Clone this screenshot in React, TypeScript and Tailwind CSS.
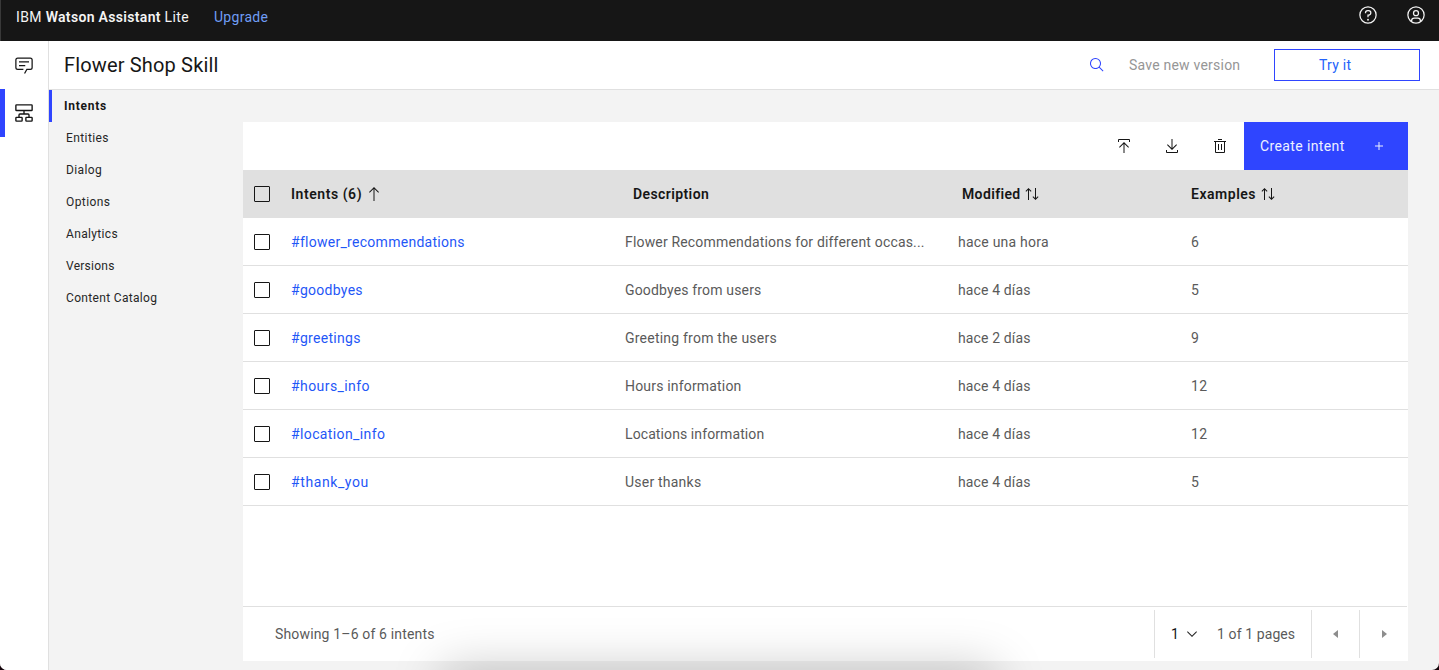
import React from "react";

type IconProps = { className?: string; children: React.ReactNode };

function Icon({ className = "size-4", children }: IconProps) {
  return (
    <svg viewBox="0 0 32 32" fill="currentColor" aria-hidden="true" className={`block shrink-0 ${className}`}>
      {children}
    </svg>
  );
}

const ChatIcon = () => (
  <Icon className="size-5">
    <path d="M17.74,30,16,29l4-7h6a2,2,0,0,0,2-2V8a2,2,0,0,0-2-2H6A2,2,0,0,0,4,8V20a2,2,0,0,0,2,2h9v2H6a4,4,0,0,1-4-4V8A4,4,0,0,1,6,4H26a4,4,0,0,1,4,4V20a4,4,0,0,1-4,4H21.16Z" />
    <path d="M8 10H24V12H8zM8 16H18V18H8z" />
  </Icon>
);

const SkillIcon = () => (
  <Icon className="size-5">
    <path
      d="M4 3H28a1 1 0 0 1 1 1V11a1 1 0 0 1-1 1H4a1 1 0 0 1-1-1V4a1 1 0 0 1 1-1ZM4 23H12a1 1 0 0 1 1 1V28a1 1 0 0 1-1 1H4a1 1 0 0 1-1-1V24a1 1 0 0 1 1-1ZM20 23H28a1 1 0 0 1 1 1V28a1 1 0 0 1-1 1H20a1 1 0 0 1-1-1V24a1 1 0 0 1 1-1ZM16 12V17M8 23V19a1.5 1.5 0 0 1 1.500-1.500H22.500a1.500 1.500 0 0 1 1.500 1.500V23"
      fill="none"
      stroke="currentColor"
      strokeWidth="2.200"
    />
  </Icon>
);

const HelpIcon = () => (
  <Icon className="size-5">
    <path d="M16,2A14,14,0,1,0,30,16,14,14,0,0,0,16,2Zm0,26A12,12,0,1,1,28,16,12,12,0,0,1,16,28Z" />
    <circle cx="16" cy="23.5" r="1.5" />
    <path d="M17,8H15.5A4.49,4.49,0,0,0,11,12.5V13h2v-.5A2.5,2.5,0,0,1,15.5,10H17a2.5,2.5,0,0,1,0,5H15v4.5h2V17a4.5,4.5,0,0,0,0-9Z" />
  </Icon>
);

const UserIcon = () => (
  <Icon className="size-5">
    <path d="M16,8a5,5,0,1,0,5,5A5,5,0,0,0,16,8Zm0,8a3,3,0,1,1,3-3A3.0034,3.0034,0,0,1,16,16Z" />
    <path d="M16,2A14,14,0,1,0,30,16,14.0158,14.0158,0,0,0,16,2ZM10,26.3765V25a3.0033,3.0033,0,0,1,3-3h6a3.0033,3.0033,0,0,1,3,3v1.3765a11.8989,11.8989,0,0,1-12,0Zm13.9925-1.4507A5.0016,5.0016,0,0,0,19,20H13a5.0016,5.0016,0,0,0-4.9925,4.9258,12,12,0,1,1,15.985,0Z" />
  </Icon>
);

const SearchIcon = () => (
  <Icon>
    <path d="M29,27.5859l-7.5521-7.5521a11.0177,11.0177,0,1,0-1.4141,1.4141L27.5859,29ZM4,13a9,9,0,1,1,9,9A9.01,9.01,0,0,1,4,13Z" />
  </Icon>
);

const UploadIcon = () => (
  <Icon>
    <path d="M6 18L7.41 19.41 15 11.83 15 30 17 30 17 11.83 24.59 19.41 26 18 16 8 6 18z" />
    <path d="M6,8V4H26V8h2V4a2,2,0,0,0-2-2H6A2,2,0,0,0,4,4V8Z" />
  </Icon>
);

const DownloadIcon = () => (
  <Icon>
    <path d="M26,24v4H6V24H4v4H4a2,2,0,0,0,2,2H26a2,2,0,0,0,2-2h0V24Z" />
    <path d="M26,14l-1.41-1.41L17,20.17V2H15V20.17L7.41,12.59,6,14,16,24,26,14Z" />
  </Icon>
);

const TrashIcon = () => (
  <Icon>
    <path d="M12 12H14V24H12zM18 12H20V24H18zM12 2H20V4H12z" />
    <path d="M4,6V8H6V28a2,2,0,0,0,2,2H24a2,2,0,0,0,2-2V8h2V6ZM8,28V8H24V28Z" />
  </Icon>
);

const AddIcon = () => (
  <Icon>
    <path d="M17 15V8H15v7H8v2h7v7h2V17h7V15Z" />
  </Icon>
);

const ArrowUpIcon = () => (
  <Icon>
    <path d="M16 2L6 12 7.41 13.41 15 5.83 15 30 17 30 17 5.83 24.59 13.41 26 12 16 2z" />
  </Icon>
);

const SortIcon = () => (
  <Icon>
    <path d="M27.6,20.6L24,24.2V4h-2v20.2l-3.600-3.600L17,22l6,6l6-6L27.600,20.600z" />
    <path d="M9 4L3 10 4.4 11.4 8 7.8 8 28 10 28 10 7.8 13.6 11.4 15 10z" />
  </Icon>
);

const ChevronIcon = () => (
  <Icon>
    <path d="M16 22L6 12 7.4 10.6 16 19.2 24.6 10.6 26 12z" />
  </Icon>
);

const CaretLeftIcon = () => (
  <Icon>
    <path d="M20 24L10 16 20 8z" />
  </Icon>
);

const CaretRightIcon = () => (
  <Icon>
    <path d="M12 8L22 16 12 24z" />
  </Icon>
);

const navItems = [
  { label: "Entities", tracking: "tracking-[0.4px]" },
  { label: "Dialog", tracking: "tracking-[0.4px]" },
  { label: "Options", tracking: "tracking-[0.42px]" },
  { label: "Analytics", tracking: "tracking-[0.35px]" },
  { label: "Versions", tracking: "tracking-[0.25px]" },
  { label: "Content Catalog", tracking: "tracking-[0.33px]" },
];

const rows = [
  { name: "#flower_recommendations", nameTracking: "tracking-[0.28px]", description: "Flower Recommendations for different occas...", textTracking: "tracking-[0.17px]", modified: "hace una hora", modifiedTracking: "tracking-[0.22px]", examples: 6 },
  { name: "#goodbyes", nameTracking: "tracking-[0.28px]", description: "Goodbyes from users", textTracking: "tracking-[0.16px]", modified: "hace 4 días", modifiedTracking: "tracking-[0.13px]", examples: 5 },
  { name: "#greetings", nameTracking: "tracking-[0.3px]", description: "Greeting from the users", textTracking: "tracking-[0.22px]", modified: "hace 2 días", modifiedTracking: "tracking-[0.13px]", examples: 9 },
  { name: "#hours_info", nameTracking: "tracking-[0.42px]", description: "Hours information", textTracking: "tracking-[0.18px]", modified: "hace 4 días", modifiedTracking: "tracking-[0.13px]", examples: 12 },
  { name: "#location_info", nameTracking: "tracking-[0.38px]", description: "Locations information", textTracking: "tracking-[0.1px]", modified: "hace 4 días", modifiedTracking: "tracking-[0.13px]", examples: 12 },
  { name: "#thank_you", nameTracking: "tracking-[0.6px]", description: "User thanks", textTracking: "tracking-[0.22px]", modified: "hace 4 días", modifiedTracking: "tracking-[0.13px]", examples: 5 },
];

const columns = "grid grid-cols-[48px_333px_334px_233px_1fr] items-center";

function Checkbox() {
  return <span role="checkbox" aria-checked="false" className="ml-[11px] block size-4 rounded-[1px] border border-[#161616]" />;
}

function TopBar() {
  return (
    <header className="flex h-[41px] shrink-0 items-start border-l border-[#393939] bg-[#161616] pl-[15px] text-sm text-[#f4f4f4]">
      <p className="mt-[7px] leading-5 tracking-[0.35px]">
        IBM <span className="font-semibold tracking-[0.32px]">Watson Assistant</span> Lite
      </p>
      <a className="mt-[7px] ml-[25px] leading-5 tracking-[0.3px] text-[#6f9df5]">Upgrade</a>
      <div className="mt-[5px] mr-[13px] ml-auto flex gap-7">
        <HelpIcon />
        <UserIcon />
      </div>
    </header>
  );
}

function IconRail() {
  return (
    <aside className="flex w-[49px] shrink-0 flex-col border-r border-[#e0e0e0] bg-white text-[#161616]">
      <div className="flex h-12 items-center pl-[14px]">
        <ChatIcon />
      </div>
      <div className="flex h-12 items-center border-l-[5px] border-[#2f45ff] pl-[9px]">
        <SkillIcon />
      </div>
    </aside>
  );
}

function TitleBar() {
  return (
    <div className="flex h-[49px] shrink-0 items-center border-b border-[#e0e0e0] bg-white pr-[19px] pl-[15px] text-sm">
      <h1 className="text-xl tracking-[0.16px] text-[#161616]">Flower Shop Skill</h1>
      <span className="ml-auto text-[#2f45ff]">
        <SearchIcon />
      </span>
      <span className="ml-6 w-[145px] tracking-[0.22px] text-[#969696]">Save new version</span>
      <button className="flex h-8 w-[146px] items-center border border-[#2f45ff] pl-[44px] tracking-[0.25px] text-[#2463fb]">
        Try it
      </button>
    </div>
  );
}

function SkillNav() {
  return (
    <nav className="w-[194px] shrink-0 text-xs text-[#262626]">
      <div className="flex h-8 items-center border-l-[3px] border-[#2f45ff] pl-3 font-bold tracking-[0.75px] text-[#161616]">Intents</div>
      {navItems.map((item) => (
        <div key={item.label} className={`flex h-8 items-center pl-[17px] ${item.tracking}`}>
          {item.label}
        </div>
      ))}
    </nav>
  );
}

function Toolbar() {
  return (
    <div className="flex h-12 items-center justify-end">
      <div className="flex gap-8 pr-4 text-[#161616]">
        <UploadIcon />
        <DownloadIcon />
        <TrashIcon />
      </div>
      <button className="flex h-12 w-[164px] items-center bg-[#2f45ff] pl-4 text-[#edf1ff]">
        <span className="w-[111px] text-left tracking-[0.38px]">Create intent</span>
        <AddIcon />
      </button>
    </div>
  );
}

function IntentTable() {
  return (
    <div>
      <div className={`${columns} h-12 bg-[#e0e0e0] font-semibold text-[#161616]`}>
        <Checkbox />
        <span className="flex items-center gap-1 tracking-[0.55px]">
          Intents (6)
          <ArrowUpIcon />
        </span>
        <span className="pl-[9px] tracking-[0.4px]">Description</span>
        <span className="flex items-center gap-[3px] pl-1 tracking-[0.36px]">
          Modified
          <SortIcon />
        </span>
        <span className="flex items-center gap-1 tracking-[0.52px]">
          Examples
          <SortIcon />
        </span>
      </div>
      {rows.map((row) => (
        <div key={row.name} className={`${columns} h-12 border-b border-[#e0e0e0] text-[#5a5a5a]`}>
          <Checkbox />
          <a className={`text-[#1f57f7] ${row.nameTracking}`}>{row.name}</a>
          <span className={`pl-px whitespace-nowrap ${row.textTracking}`}>{row.description}</span>
          <span className={row.modifiedTracking}>{row.modified}</span>
          <span className="tracking-[0.3px]">{row.examples}</span>
        </div>
      ))}
    </div>
  );
}

function Pagination() {
  return (
    <div className="mr-px mt-auto flex h-[55px] items-start border-t border-[#e0e0e0] pt-[3px] text-[#5a5a5a]">
      <span className="pl-8 leading-[48px] tracking-[0.16px]">Showing 1–6 of 6 intents</span>
      <div className="ml-auto flex h-12 items-center border-l border-[#e0e0e0] pl-4">
        <span className="w-[13px] text-[#161616]">1</span>
        <span className="text-[#262626]">
          <ChevronIcon />
        </span>
        <span className="ml-[17px] w-[94px] tracking-[0.1px]">1 of 1 pages</span>
      </div>
      <span className="flex h-12 w-12 items-center justify-center border-l border-[#e0e0e0] text-[#8d8d8d]">
        <CaretLeftIcon />
      </span>
      <span className="flex h-12 w-12 items-center justify-center border-l border-[#e0e0e0] text-[#8d8d8d]">
        <CaretRightIcon />
      </span>
    </div>
  );
}

export default function App() {
  return (
    <div className="h-[670px] w-[1439px] overflow-hidden bg-[#14040a]">
      <div className="relative flex h-full flex-col overflow-hidden rounded-b-[7px] bg-[#f3f3f3] font-['Roboto','Liberation_Sans',sans-serif]">
        <TopBar />
        <div className="flex min-h-0 flex-1">
          <IconRail />
          <div className="flex min-w-0 flex-1 flex-col">
            <TitleBar />
            <div className="flex min-h-0 flex-1">
              <SkillNav />
              <main className="mt-8 mr-[31px] mb-[9px] flex flex-1 flex-col bg-white text-sm">
                <Toolbar />
                <IntentTable />
                <Pagination />
              </main>
            </div>
          </div>
        </div>
        <div className="pointer-events-none absolute top-full left-[443px] h-10 w-[552px] shadow-[0_0_50px_rgba(0,0,0,0.25)]" />
      </div>
    </div>
  );
}
